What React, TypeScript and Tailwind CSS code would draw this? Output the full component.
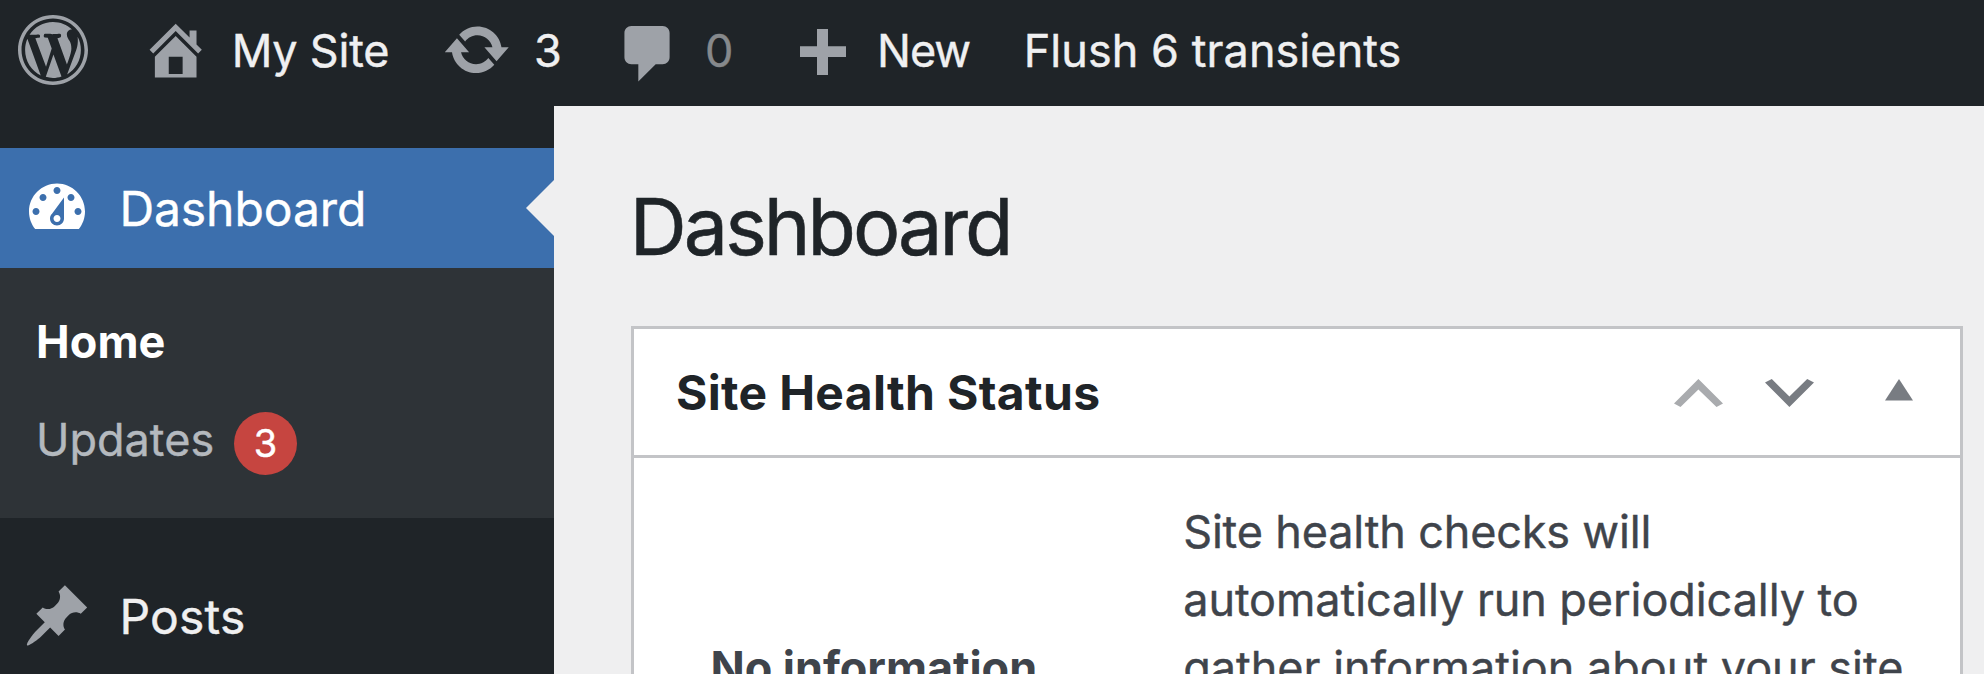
import React from "react";

const icons = {
  wordpress:
    "M20 10c0-5.52-4.48-10-10-10S0 4.48 0 10s4.48 10 10 10 10-4.48 10-10zM10 1.01c4.97 0 8.99 4.02 8.99 8.99s-4.02 8.99-8.99 8.99S1.01 14.97 1.01 10 5.03 1.01 10 1.01zM8.01 14.82L4.96 6.61c.49-.03 1.05-.08 1.05-.08.43-.05.38-1.01-.06-.99 0 0-1.29.1-2.13.1-.15 0-.33 0-.52-.01 1.44-2.17 3.9-3.6 6.7-3.6 2.09 0 3.99.79 5.41 2.09-.6-.08-1.45.35-1.45 1.42 0 .66.38 1.22.79 1.88.31.54.5 1.22.5 2.21 0 1.34-1.27 4.48-1.27 4.48l-2.71-7.5c.48-.03.75-.16.75-.16.43-.05.38-1.1-.05-1.08 0 0-1.3.11-2.14.11-.78 0-2.11-.11-2.11-.11-.43-.02-.48 1.06-.05 1.08l.84.08 1.12 3.04zm6.02 2.15L16.64 10s.67-1.69.39-3.81c.63 1.14.94 2.42.94 3.81 0 2.96-1.56 5.58-3.94 6.97zM2.68 6.77L6.5 17.25c-2.67-1.3-4.47-4.08-4.47-7.25 0-1.16.2-2.23.65-3.23zm7.45 4.53l2.29 6.25c-.75.27-1.57.42-2.42.42-.72 0-1.41-.11-2.06-.3z",
  home: "M16 8.5l1.53 1.53-1.06 1.06L10 4.6l-6.47 6.49-1.06-1.06L10 2.5l4 4v-2h2v4zm-6-2.46l6 5.99V18H4v-5.97zM12 17v-5H8v5h4z",
  update:
    "M10.2 3.28c3.53 0 6.43 2.61 6.92 6h2.08l-3.5 4-3.5-4h2.32c-.45-1.97-2.21-3.45-4.32-3.45-1.45 0-2.73.71-3.54 1.78L4.95 5.66C6.23 4.2 8.11 3.28 10.2 3.28zm-.4 13.44c-3.52 0-6.43-2.61-6.92-6H.8l3.5-4c1.17 1.33 2.33 2.67 3.5 4H5.48c.45 1.97 2.21 3.45 4.32 3.45 1.45 0 2.73-.71 3.54-1.78l1.71 1.95c-1.28 1.46-3.15 2.38-5.25 2.38z",
  comment:
    "M5 2h9c1.1 0 2 .9 2 2v7c0 1.1-.9 2-2 2h-2l-5 5v-5H5c-1.1 0-2-.9-2-2V4c0-1.1.9-2 2-2z",
  dashboard:
    "M3.76 16h12.48c1.1-1.37 1.76-3.11 1.76-5 0-4.42-3.58-8-8-8s-8 3.58-8 8c0 1.89.66 3.63 1.76 5zM10 4c.55 0 1 .45 1 1s-.45 1-1 1-1-.45-1-1 .45-1 1-1zM6 6c.55 0 1 .45 1 1s-.45 1-1 1-1-.45-1-1 .45-1 1-1zm8 0c.55 0 1 .45 1 1s-.45 1-1 1-1-.45-1-1 .45-1 1-1zm-5.37 5.55L12 7v6c0 1.1-.9 2-2 2s-2-.9-2-2c0-.57.24-1.08.63-1.45zM4 10c.55 0 1 .45 1 1s-.45 1-1 1-1-.45-1-1 .45-1 1-1zm12 0c.55 0 1 .45 1 1s-.45 1-1 1-1-.45-1-1 .45-1 1-1zm-5 3c0-.55-.45-1-1-1s-1 .45-1 1 .45 1 1 1 1-.45 1-1z",
  pin: "M10.44 3.02l1.82-1.82 6.36 6.35-1.83 1.82c-1.05-.68-2.48-.57-3.41.36l-.75.75c-.92.93-1.04 2.35-.35 3.41l-1.83 1.82-2.41-2.41-2.8 2.79c-.42.42-3.38 2.71-3.8 2.29s1.86-3.39 2.28-3.81l2.79-2.79L4.1 9.36l1.83-1.82c1.05.69 2.48.57 3.4-.36l.75-.75c.93-.92 1.05-2.35.36-3.41z",
};

function Dashicon({ name, className }: { name: keyof typeof icons; className: string }) {
  return (
    <svg viewBox="0 0 20 20" fill="currentColor" fillRule="evenodd" aria-hidden="true" className={`shrink-0 ${className}`}>
      <path d={icons[name]} />
    </svg>
  );
}

function AdminBar() {
  return (
    <header className="flex h-[106px] shrink-0 items-start bg-[#1f2428] text-[45px] leading-[102px] whitespace-nowrap text-[#f0f0f1]">
      <div className="flex w-[141.4px] shrink-0 pl-[18.4px] text-[#9ea2a8]">
        <Dashicon name="wordpress" className="mt-[15px] size-[70px]" />
      </div>
      <a className="flex w-[301px] shrink-0">
        <Dashicon name="home" className="mt-[15.3px] mr-[20.9px] size-[69.4px] text-[#9ea2a8]" />
        <span className="tracking-[-0.21px]">My Site</span>
      </a>
      <a className="flex w-[171.1px] shrink-0">
        <Dashicon name="update" className="mt-[15px] mr-[22px] size-[69.5px] text-[#9ea2a8]" />
        <span>3</span>
      </a>
      <a className="flex w-[186.5px] shrink-0">
        <Dashicon name="comment" className="mt-[19px] mr-[21.2px] ml-[0.9px] size-[69.5px] text-[#9ea2a8]" />
        <span className="text-[#86898c]">0</span>
      </a>
      <a className="flex w-[223.7px] shrink-0">
        <svg viewBox="0 0 46 46" fill="currentColor" aria-hidden="true" className="mt-[29px] mr-[31px] size-[46px] shrink-0 text-[#9ea2a8]">
          <path d="M17 0h11v17.2h18v10.9h-18v17.9h-11v-17.9h-17v-10.9h17z" />
        </svg>
        <span className="tracking-[-1px]">New</span>
      </a>
      <a className="tracking-[0.06px]">Flush 6 transients</a>
    </header>
  );
}

function Sidebar() {
  return (
    <nav className="flex w-[554px] shrink-0 flex-col bg-[#1f2428] pt-[42px] text-[#f0f0f1]">
      <a className="flex h-[120px] shrink-0 items-center bg-[#3c6fad] pl-[22px] text-[48px] leading-[120px] text-white">
        <Dashicon name="dashboard" className="size-[70px]" />
        <span className="mt-[2px] ml-[27.4px] tracking-[-0.07px]">Dashboard</span>
        <svg viewBox="0 0 28 56" className="ml-auto h-[56px] w-[28px] fill-[#efeff0]" aria-hidden="true">
          <path d="M28 0v56L0 28z" />
        </svg>
      </a>
      <ul className="flex h-[250px] shrink-0 flex-col bg-[#2e3337] pt-[25px] pl-[36px] text-[45px] leading-[98px]">
        <li className="font-bold tracking-[0.1px] text-white [-webkit-text-stroke:0]">Home</li>
        <li className="flex h-[98px] items-center text-[#b4b9be]">
          <span className="w-[198px]">Updates</span>
          <span className="mt-[7px] flex size-[63px] items-center justify-center rounded-full bg-[#c64540] text-[38px] leading-[63px] text-white">
            3
          </span>
        </li>
      </ul>
      <a className="mt-[38px] flex h-[120px] shrink-0 items-center pl-[22px] text-[48px] leading-[120px]">
        <Dashicon name="pin" className="size-[70px] text-[#9ea2a8]" />
        <span className="mt-[2px] ml-[27.4px] tracking-[0.2px]">Posts</span>
      </a>
    </nav>
  );
}

function HealthCard() {
  return (
    <section className="mr-[21px] ml-[77px] flex h-[420px] flex-col border-[3px] border-[#c3c4c7] bg-white">
      <div className="flex h-[129px] shrink-0 items-center border-b-[3px] border-[#c3c4c7] pr-[46.7px] pl-[42px]">
        <h2 className="mt-px grow text-[48px] leading-[125px] font-bold tracking-[0.33px] text-[#1f2428] [-webkit-text-stroke:0]">Site Health Status</h2>
        <svg viewBox="0 0 49 28" className="mt-px mr-[42px] h-[28px] w-[49px] shrink-0 fill-[#a9abae]" aria-hidden="true">
          <path d="M24.4 0L49 24.5 42.5 28 24.4 10.4 6.5 28 0 24.5z" />
        </svg>
        <svg viewBox="0 0 49 28" className="mt-px mr-[71.3px] h-[28px] w-[49px] shrink-0 fill-[#787c82]" aria-hidden="true">
          <path d="M24.4 28L49 3.5 42.2 0 24.4 17.6 6.8 0 0 3.5z" />
        </svg>
        <svg viewBox="0 0 28 22" className="-mt-[4px] h-[22px] w-[28px] shrink-0 fill-[#787c82]" aria-hidden="true">
          <path d="M14 0l14 21.6h-28z" />
        </svg>
      </div>
      <div className="flex text-[45px] leading-[68px] whitespace-nowrap text-[#3f444b]">
        <p className="w-[549.2px] shrink-0 pt-[176px] pl-[76.4px] font-bold tracking-[-0.05px] [-webkit-text-stroke:0]">No information</p>
        <p className="pt-[40px]">
          <span className="tracking-[-0.17px]">Site health checks will</span>
          <br />
          <span className="tracking-[-0.08px]">automatically run periodically to</span>
          <br />
          <span className="tracking-[-0.01px]">gather information about your site</span>
        </p>
      </div>
    </section>
  );
}

export default function App() {
  return (
    <div className="flex h-[674px] w-[1984px] flex-col overflow-hidden bg-[#efeff0] font-['Inter','Liberation_Sans',sans-serif] [-webkit-text-stroke:0.4px]">
      <AdminBar />
      <div className="flex min-h-0 grow">
        <Sidebar />
        <main className="flex grow flex-col">
          <h1 className="mt-[60px] mb-[40px] ml-[75.8px] text-[79px] leading-[120px] tracking-[-3px] text-[#1f2428] [-webkit-text-stroke:0.6px]">Dashboard</h1>
          <HealthCard />
        </main>
      </div>
    </div>
  );
}
